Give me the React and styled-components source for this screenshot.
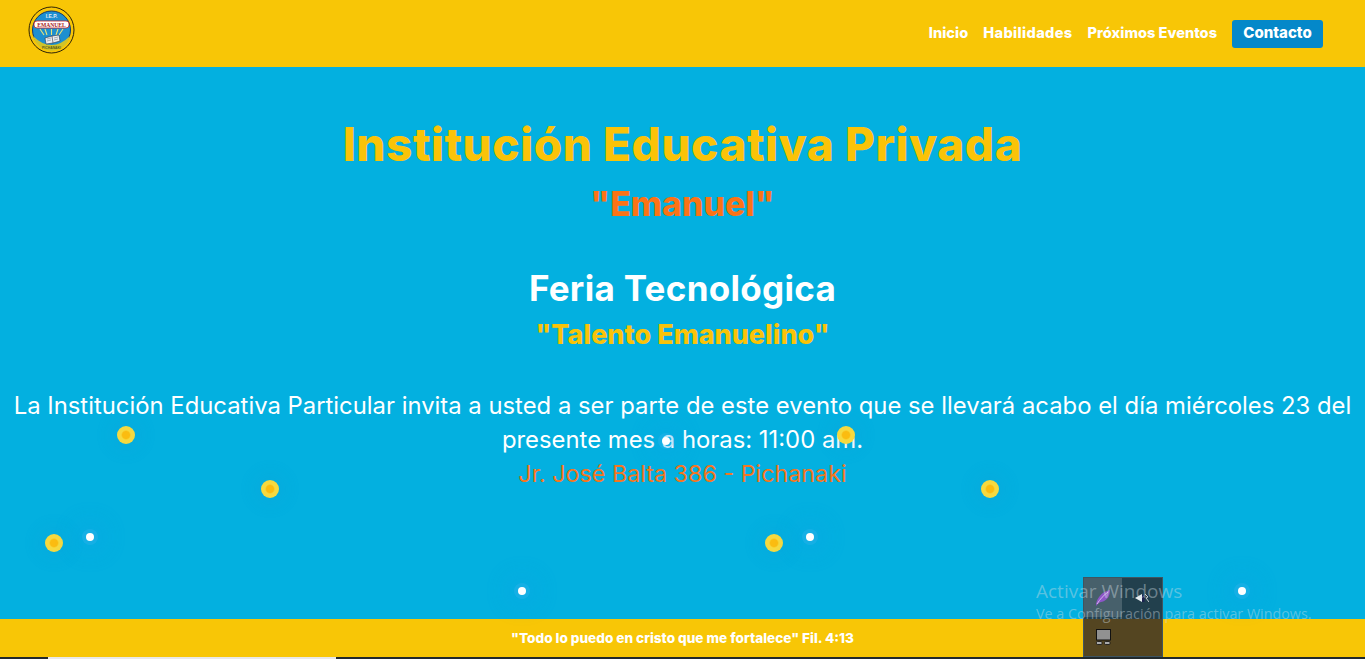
import React from "react";
import styled, { createGlobalStyle } from "styled-components";

const Global = createGlobalStyle`
  html, body { margin: 0; padding: 0; height: 100%; overflow: hidden; }
  body { font-family: "Inter", "Noto Sans", sans-serif; background: #21292c; }
`;
const Page = styled.div`
  position: relative; width: 1365px; height: 659px; overflow: hidden;
  display: flex; flex-direction: column; background: #03b0e0;
`;
const Header = styled.header`
  height: 67px; flex: none; background: #f8c606; display: flex; align-items: center;
  justify-content: space-between; padding: 0 42px 0 28px; box-sizing: border-box;
`;
const LogoMark = styled.svg`display: block; margin-bottom: 7px;`;
const Nav = styled.nav`display: flex; align-items: center; gap: 15px;`;
const NavLink = styled.a`
  color: #fff; font-weight: 800; font-size: 14.6px; white-space: nowrap; padding-bottom: 2px;
  letter-spacing: ${p => p.$track || 0}px;
`;
const NavButton = styled(NavLink)`
  background: #0488c9; border-radius: 3px; height: 28px; width: 91px; box-sizing: border-box;
  display: flex; align-items: center; justify-content: center; font-size: 15px;
`;
const Main = styled.main`
  flex: 1; display: flex; flex-direction: column; align-items: center; text-align: center;
`;
const Title = styled.h1`
  margin: 49px 0 0; font-size: 46px; line-height: 56px; font-weight: 800; color: #fac308;
  letter-spacing: 0.5px;
`;
const Subtitle = styled.h2`
  margin: 12px 0 0; font-size: 33.8px; line-height: 40px; font-weight: 800; color: #fb7316;
`;
const Fair = styled.h2`
  margin: 43px 0 0; font-size: 35px; line-height: 42px; font-weight: 700; color: #fff;
  letter-spacing: 0.3px;
`;
const Slogan = styled.h3`
  margin: 9px 0 0; font-size: 27px; line-height: 34px; font-weight: 800; color: #fac308;
`;
const Lead = styled.p`
  margin: 37px 0 0; width: 1365px; font-size: 23.85px; line-height: 34px; font-weight: 400; color: #fff;
`;
const Place = styled.span`display: block; color: #f67620; font-size: 23.3px;`;
const Footer = styled.footer`
  height: 38px; flex: none; background: #f8c606; display: flex; align-items: center;
  justify-content: center; color: #fff; font-weight: 800; font-size: 13.6px;
`;
const BottomStrip = styled.div`
  height: 2px; flex: none; background: #21292c; padding-left: 48px;
`;
const StripThumb = styled.div`height: 2px; width: 288px; background: #e8e8e8;`;
const Sun = styled.i`
  position: absolute; left: ${p => p.$x - 9}px; top: ${p => p.$y - 9}px; width: 18px; height: 18px;
  border-radius: 50%; background: radial-gradient(circle, #fbbc10 0 3.5px, #f6d93f 5px);
  box-shadow: 0 0 16px 7px rgba(30,150,215,.14);
`;
const Spark = styled.i`
  position: absolute; left: ${p => p.$x - 4}px; top: ${p => p.$y - 4}px; width: 8px; height: 8px;
  border-radius: 50%; background: #fff;
  box-shadow: 0 0 0 4px rgba(70,185,245,.25), 0 0 20px 14px rgba(20,155,232,.14);
`;
const Popup = styled.div`
  position: absolute; left: 1083px; top: 577px; width: 80px; height: 80px; box-sizing: border-box;
  background: rgba(42,36,40,.8); border: 1px solid #3f5560;
  display: grid; grid-template-columns: 38px 40px; grid-template-rows: 39px 39px;
`;
const PopupCell = styled.div`
  display: flex; align-items: center; justify-content: center;
  background: ${p => (p.$active ? "rgba(255,255,255,.17)" : "transparent")};
`;
const Watermark = styled.div`
  position: absolute; left: 1036px; top: 579px; color: rgba(210,222,228,.42);
  font-family: "Open Sans", sans-serif; white-space: nowrap;
`;
const WatermarkTitle = styled.div`font-size: 19px; line-height: 24px;`;
const WatermarkText = styled.div`font-size: 14.3px; line-height: 20px; margin-top: 1px;`;

const Logo = () => (
  <LogoMark width="48" height="50" viewBox="0 0 48 50">
    <ellipse cx="23.5" cy="25" rx="22.5" ry="23" fill="#f8c606" stroke="#2f2408" strokeWidth="1" />
    <circle cx="23.5" cy="25" r="19" fill="#1d8fd0" stroke="#16386b" strokeWidth="1" />
    <path d="M5 31 A19 19 0 0 0 42 31 Q33 40 23.5 40 Q14 40 5 31Z" fill="#cfc32a" />
    <text x="23.5" y="12.5" textAnchor="middle" fontSize="5" fontWeight="700" fill="#e8eef5" fontFamily="Liberation Sans">I.E.P.</text>
    <rect x="6" y="16" width="35" height="7" rx="3" fill="#fff" stroke="#c22" strokeWidth=".8" />
    <text x="23.5" y="21.8" textAnchor="middle" fontSize="5.6" fontWeight="700" fill="#a81818" fontFamily="Liberation Serif">EMANUEL</text>
    <path d="M12 24l4 6M17 24l2 6M23.5 24v6M30 24l-2 6M35 24l-4 6" stroke="#e9e37a" strokeWidth="1.1" />
    <path d="M17 33l7-2 7-1 1 6-7 2-7 1z" fill="#e9eef2" stroke="#334" strokeWidth=".6" />
    <path d="M24 31l1 7" stroke="#334" strokeWidth=".6" />
    <path d="M19 34l4-1M19 36l4-1M26 33l4-1M26 35l4-1" stroke="#667" strokeWidth=".5" />
    <text x="23.5" y="44" textAnchor="middle" fontSize="3.4" fontWeight="700" fill="#5b5a1a" fontFamily="Liberation Sans">PICHANAKI</text>
  </LogoMark>
);
const Feather = () => (
  <svg width="16" height="18" viewBox="0 0 16 18">
    <path d="M1 17C1 10 6 3 15 1c0 6-3 11-9 12-2 .4-3 2-5 4z" fill="#8d55c8" />
    <path d="M2 15C5 10 9 6 13 3" stroke="#d9b8ee" strokeWidth="1" fill="none" />
  </svg>
);
const Speaker = () => (
  <svg width="14" height="10" viewBox="0 0 14 10">
    <path d="M0 5l7-4v8z" fill="#e8eef2" />
    <rect x="7" y="2" width="2.5" height="7" fill="#1c2350" />
    <path d="M10 1l3 3-2 1 3 4" stroke="#c8ccd4" strokeWidth="1" fill="none" />
  </svg>
);
const Device = () => (
  <svg width="15" height="16" viewBox="0 0 15 16">
    <rect x=".5" y=".5" width="14" height="10.5" fill="#919191" stroke="#111" />
    <rect x=".5" y="12.5" width="5.5" height="3" rx="1" fill="#aaa" stroke="#111" strokeWidth=".8" />
    <rect x="8.5" y="12.5" width="5.5" height="3" rx="1" fill="#aaa" stroke="#111" strokeWidth=".8" />
  </svg>
);

const suns = [[126,435],[270,489],[54,543],[846,435],[990,489],[774,543]];
const sparks = [[90,537],[666,441],[810,537],[522,591],[1242,591]];

export default function App() {
  return (
    <Page>
      <Global />
      <Header>
        <Logo />
        <Nav>
          <NavLink>Inicio</NavLink>
          <NavLink $track={0.35}>Habilidades</NavLink>
          <NavLink>Próximos Eventos</NavLink>
          <NavButton>Contacto</NavButton>
        </Nav>
      </Header>
      <Main>
        <Title>Institución Educativa Privada</Title>
        <Subtitle>"Emanuel"</Subtitle>
        <Fair>Feria Tecnológica</Fair>
        <Slogan>"Talento Emanuelino"</Slogan>
        <Lead>
          La Institución Educativa Particular invita a usted a ser parte de este evento que se llevará acabo el día miércoles 23 del presente mes a horas: 11:00 am.
          <Place>Jr. José Balta 386 - Pichanaki</Place>
        </Lead>
      </Main>
      <Footer>"Todo lo puedo en cristo que me fortalece" Fil. 4:13</Footer>
      <BottomStrip><StripThumb /></BottomStrip>
      {suns.map(([x, y]) => <Sun key={x} $x={x} $y={y} />)}
      {sparks.map(([x, y]) => <Spark key={x} $x={x} $y={y} />)}
      <Popup>
        <PopupCell $active><Feather /></PopupCell>
        <PopupCell><Speaker /></PopupCell>
        <PopupCell><Device /></PopupCell>
        <PopupCell />
      </Popup>
      <Watermark>
        <WatermarkTitle>Activar Windows</WatermarkTitle>
        <WatermarkText>Ve a Configuración para activar Windows.</WatermarkText>
      </Watermark>
    </Page>
  );
}
